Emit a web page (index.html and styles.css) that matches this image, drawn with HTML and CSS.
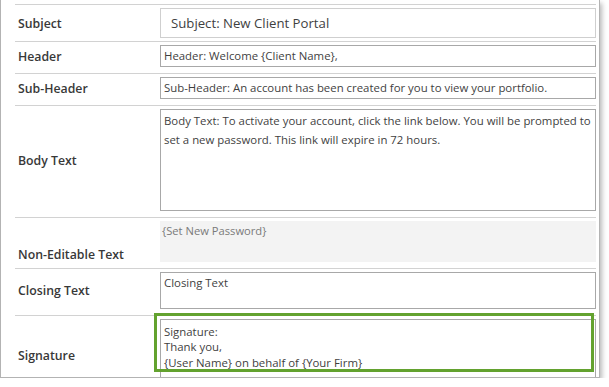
FILE: index.html
```html
<!DOCTYPE html>
<html>
<head>
<meta charset="utf-8">
<link rel="stylesheet" href="styles.css">
</head>
<body>
<div class="frame">
  <div class="row row-subject">
    <div class="label">Subject</div>
    <div class="field field-subject">Subject: New Client Portal</div>
  </div>
  <div class="row">
    <div class="label">Header</div>
    <div class="field field-line">Header: Welcome {Client Name},</div>
  </div>
  <div class="row">
    <div class="label">Sub-Header</div>
    <div class="field field-line">Sub-Header: An account has been created for you to view your portfolio.</div>
  </div>
  <div class="row">
    <div class="label">Body Text</div>
    <div class="field field-body">Body Text: To activate your account, click the link below. You will be prompted to set a new password. This link will expire in 72 hours.</div>
  </div>
  <div class="row row-noedit">
    <div class="label label-bottom">Non-Editable Text</div>
    <div class="field-noedit">{Set New Password}</div>
  </div>
  <div class="row">
    <div class="label">Closing Text</div>
    <div class="field field-closing">Closing Text</div>
  </div>
  <div class="row">
    <div class="label">Signature</div>
    <div class="field field-signature">Signature:<br>Thank you,<br>{User Name} on behalf of {Your Firm}</div>
  </div>
  <div class="highlight"></div>
</div>
</body>
</html>
```

FILE: styles.css
```css
html, body {
  margin: 0;
  padding: 0;
  background: #ffffff;
}

.frame {
  position: relative;
  width: 600px;
  height: 378px;
  box-sizing: border-box;
  border: 1px solid #b3b3b3;
  border-top: none;
  box-shadow: 2px 3px 5px rgba(0, 0, 0, 0.28);
  overflow: hidden;
  padding: 4px 3px 0 14px;
  font-family: "Open Sans", "Noto Sans", sans-serif;
  color: #3b3b3b;
}

.row {
  display: grid;
  grid-template-columns: 145px 1fr;
  border-top: 1px solid #d2d2d2;
  padding: 3px 0 6px;
}

.row-subject {
  padding-bottom: 3px;
}

.label {
  align-self: center;
  font-size: 12.3px;
  font-weight: 600;
  padding-left: 3px;
  color: #383838;
}

.label-bottom {
  align-self: end;
  margin-bottom: -1px;
}

.field {
  box-sizing: border-box;
  border: 1px solid #a8a8a8;
  font-size: 11.4px;
  color: #3f3f3f;
  padding: 0 3px;
  white-space: nowrap;
  overflow: hidden;
}

.field-subject {
  height: 30px;
  border-color: #cfcfcf;
  font-size: 13.2px;
  line-height: 28px;
  padding-left: 10px;
}

.field-line {
  height: 22px;
  line-height: 20px;
}

.field-body {
  height: 102px;
  white-space: normal;
  line-height: 19px;
  padding: 1px 0 0 3px;
}

.field-noedit {
  height: 41px;
  background: #f3f3f3;
  font-size: 11.2px;
  color: #7a7a7a;
  padding: 2px 2px 0;
  line-height: 16px;
  box-sizing: border-box;
}

.field-closing {
  height: 37px;
  line-height: 20px;
}

.field-signature {
  height: 72px;
  line-height: 15.3px;
  padding-top: 4px;
  white-space: normal;
}

.highlight {
  position: absolute;
  left: 153px;
  top: 313px;
  width: 440px;
  height: 59px;
  box-sizing: border-box;
  border: 3px solid #63a22f;
}
```
